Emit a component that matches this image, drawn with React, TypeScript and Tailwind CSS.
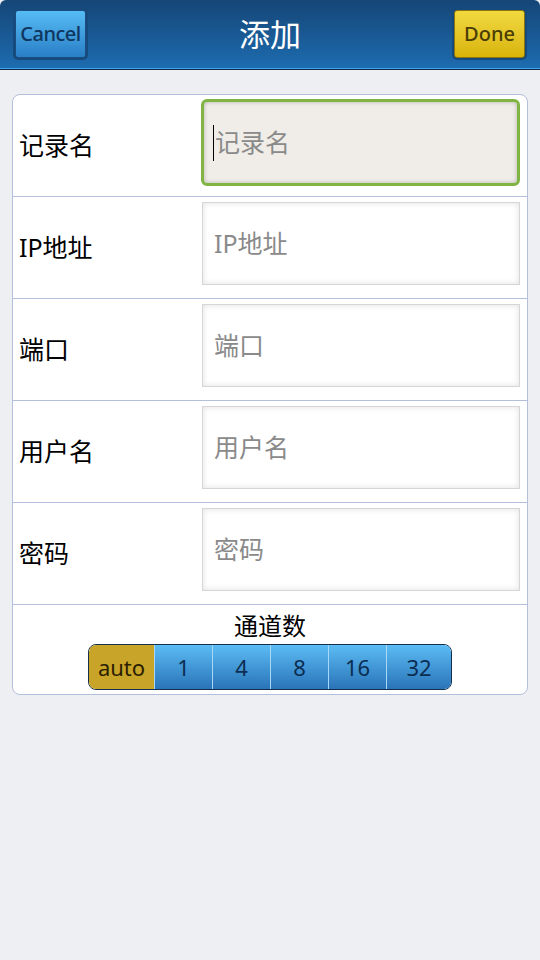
import { useState } from 'react';

const FONT = { fontFamily: '"Noto Sans", "Noto Sans CJK SC", sans-serif' };

const FIELDS = ['记录名', 'IP地址', '端口', '用户名', '密码'];
const CHANNELS = ['auto', '1', '4', '8', '16', '32'];

function Field({ label, focused }: { label: string; focused?: boolean }) {
  return (
    <div className="flex h-[102px] border-b border-[#b3bfdb]">
      <div className="flex w-[189px] items-center pl-[6px] text-[25px] text-black">{label}</div>
      <div className="flex-1 pt-[5px] pr-[7px]">
        {focused ? (
          <div className="relative -mt-[1px] -ml-[1px] flex h-[87px] items-center rounded-[6px] border-[3px] border-[#80b443] bg-[#f0ede8] pl-[9px] shadow-[inset_0_0_4px_rgba(0,0,0,0.25)]">
            <span className="mr-[1px] h-[36px] w-[1px] bg-black" />
            <span className="text-[25px] text-[#8a8a8a]">{label}</span>
          </div>
        ) : (
          <div className="flex h-[83px] items-center border border-[#d6d6d6] bg-white pl-[11px] shadow-[inset_0_0_6px_rgba(0,0,0,0.12)]">
            <span className="text-[25px] text-[#8a8a8a]">{label}</span>
          </div>
        )}
      </div>
    </div>
  );
}

export default function App() {
  const [channel, setChannel] = useState('auto');

  return (
    <div className="min-h-[960px] w-[540px] bg-[#eeeff3]" style={FONT}>
      {/* header */}
      <div className="flex h-[69px] items-center justify-between rounded-t-[6px] bg-gradient-to-b from-[#154677] to-[#1d6cb0] px-[13px] border-b border-[#40a4ec]">
        <div className="rounded-[5px] bg-[#174a7c] p-[2px]">
          <button className="flex h-[48px] w-[71px] items-center justify-center rounded-[3px] border border-[#1a4c80] bg-gradient-to-b from-[#56bcf4] to-[#2a7fc6] text-[20px] font-medium tracking-[-0.5px] text-[#0f355f]">
            Cancel
          </button>
        </div>
        <div className="text-[31px] text-white">添加</div>
        <div className="rounded-[5px] bg-[#174a7c] p-[2px]">
          <button className="flex h-[48px] w-[71px] items-center justify-center rounded-[3px] border border-[#8a7410] bg-gradient-to-b from-[#f1d93e] to-[#d9b404] text-[20px] font-medium text-[#4b3d06]">
            Done
          </button>
        </div>
      </div>
      <div className="h-[1px] bg-[#0e2a48]" />

      {/* form card */}
      <div className="mx-[12px] mt-[24px] overflow-hidden rounded-[8px] border border-[#b3bfdb] bg-white">
        {FIELDS.map((f, i) => (
          <Field key={f} label={f} focused={i === 0} />
        ))}
        <div className="flex flex-col items-center pt-[6px] pb-[4px]">
          <div className="text-[24px] leading-[30px] text-black">通道数</div>
          <div className="mt-[3px] flex h-[46px] overflow-hidden rounded-[8px] border border-[#14304e]">
            {CHANNELS.map((c, i) => (
              <button
                key={c}
                onClick={() => setChannel(c)}
                className={
                  (channel === c
                    ? 'bg-[#c8a528] text-[#2a2000] '
                    : 'bg-gradient-to-b from-[#5cbcf4] to-[#2a74b8] text-[#0c2d52] ') +
                  (i === 0 ? 'w-[65px] ' : i === CHANNELS.length - 1 ? 'w-[65px] border-l border-[#a8d8f8] ' : 'w-[58px] border-l border-[#a8d8f8] ') +
                  'flex items-center justify-center text-[22px]'
                }
              >
                {c}
              </button>
            ))}
          </div>
        </div>
      </div>
    </div>
  );
}
